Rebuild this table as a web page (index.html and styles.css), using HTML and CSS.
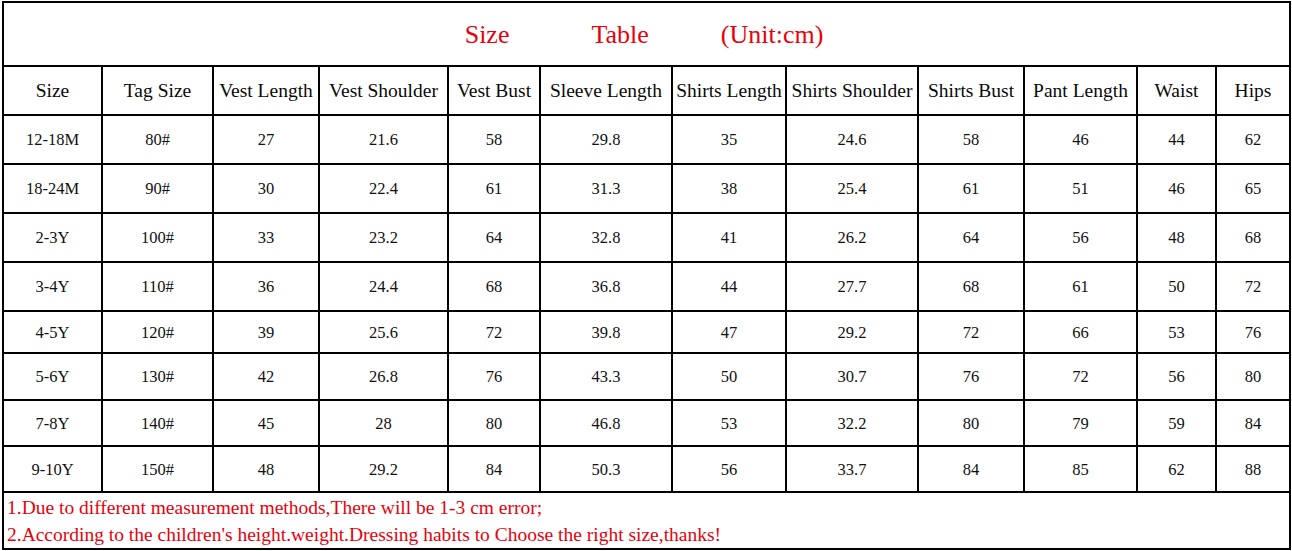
FILE: index.html
```html
<!DOCTYPE html>
<html>
<head>
<meta charset="utf-8">
<link rel="stylesheet" href="styles.css">
</head>
<body>
<table class="size-table">
  <colgroup>
    <col class="c1"><col class="c2"><col class="c3"><col class="c4"><col class="c5"><col class="c6">
    <col class="c7"><col class="c8"><col class="c9"><col class="c10"><col class="c11"><col class="c12">
  </colgroup>
  <tr class="title-row">
    <td colspan="12">
      <div class="title">
        <span>Size</span><span class="t2">Table</span><span class="t3">(Unit:cm)</span>
      </div>
    </td>
  </tr>
  <tr class="head-row">
    <th>Size</th><th>Tag Size</th><th>Vest Length</th><th>Vest Shoulder</th><th>Vest Bust</th><th>Sleeve Length</th>
    <th>Shirts Length</th><th>Shirts Shoulder</th><th>Shirts Bust</th><th>Pant Length</th><th>Waist</th><th>Hips</th>
  </tr>
  <tr class="r49"><td>12-18M</td><td>80#</td><td>27</td><td>21.6</td><td>58</td><td>29.8</td><td>35</td><td>24.6</td><td>58</td><td>46</td><td>44</td><td>62</td></tr>
  <tr class="r49"><td>18-24M</td><td>90#</td><td>30</td><td>22.4</td><td>61</td><td>31.3</td><td>38</td><td>25.4</td><td>61</td><td>51</td><td>46</td><td>65</td></tr>
  <tr class="r49"><td>2-3Y</td><td>100#</td><td>33</td><td>23.2</td><td>64</td><td>32.8</td><td>41</td><td>26.2</td><td>64</td><td>56</td><td>48</td><td>68</td></tr>
  <tr class="r49"><td>3-4Y</td><td>110#</td><td>36</td><td>24.4</td><td>68</td><td>36.8</td><td>44</td><td>27.7</td><td>68</td><td>61</td><td>50</td><td>72</td></tr>
  <tr class="r42"><td>4-5Y</td><td>120#</td><td>39</td><td>25.6</td><td>72</td><td>39.8</td><td>47</td><td>29.2</td><td>72</td><td>66</td><td>53</td><td>76</td></tr>
  <tr class="r47"><td>5-6Y</td><td>130#</td><td>42</td><td>26.8</td><td>76</td><td>43.3</td><td>50</td><td>30.7</td><td>76</td><td>72</td><td>56</td><td>80</td></tr>
  <tr class="r46"><td>7-8Y</td><td>140#</td><td>45</td><td>28</td><td>80</td><td>46.8</td><td>53</td><td>32.2</td><td>80</td><td>79</td><td>59</td><td>84</td></tr>
  <tr class="r46"><td>9-10Y</td><td>150#</td><td>48</td><td>29.2</td><td>84</td><td>50.3</td><td>56</td><td>33.7</td><td>84</td><td>85</td><td>62</td><td>88</td></tr>
  <tr class="notes-row">
    <td colspan="12">
      <div class="note">1.Due to different measurement methods,There will be 1-3 cm error;</div>
      <div class="note">2.According to the children's height.weight.Dressing habits to Choose the right size,thanks!</div>
    </td>
  </tr>
</table>
</body>
</html>
```

FILE: styles.css
```css
html, body {
  margin: 0;
  padding: 0;
  background: #ffffff;
}

body {
  padding: 1px 0 0 2px;
  font-family: "Liberation Serif", "Times New Roman", serif;
  color: #111111;
}

.size-table {
  border-collapse: collapse;
  table-layout: fixed;
  width: 1287px;
}

.size-table td,
.size-table th {
  border: 2px solid #000000;
  padding: 0;
  text-align: center;
  vertical-align: middle;
  white-space: nowrap;
  overflow: hidden;
}

.c1 { width: 99px; }
.c2 { width: 111px; }
.c3 { width: 106px; }
.c4 { width: 129px; }
.c5 { width: 92px; }
.c6 { width: 132px; }
.c7 { width: 114px; }
.c8 { width: 132px; }
.c9 { width: 106px; }
.c10 { width: 113px; }
.c11 { width: 79px; }
.c12 { width: 74px; }

.title-row td { height: 62px; }

.title {
  display: flex;
  justify-content: center;
  align-items: center;
  color: #e8000b;
  font-size: 26px;
  padding-right: 5px;
  padding-top: 2px;
}

.title .t2 { margin-left: 82px; }
.title .t3 { margin-left: 72px; }

.head-row th {
  height: 46px;
  font-weight: normal;
  font-size: 19.5px;
  color: #0a0a0a;
  padding-top: 1px;
}

.size-table tr td { font-size: 16.5px; padding-top: 1px; }
.size-table .title-row td { font-size: 26px; padding-top: 0; }

.r49 td { height: 46px; }
.r47 td { height: 44px; }
.r46 td { height: 43px; }
.r42 td { height: 39px; }

.size-table .notes-row td {
  height: 53px;
  text-align: left;
  padding: 1px 0 0 3px;
}

.note {
  color: #e8000b;
  font-size: 19.5px;
  line-height: 27px;
}
```
